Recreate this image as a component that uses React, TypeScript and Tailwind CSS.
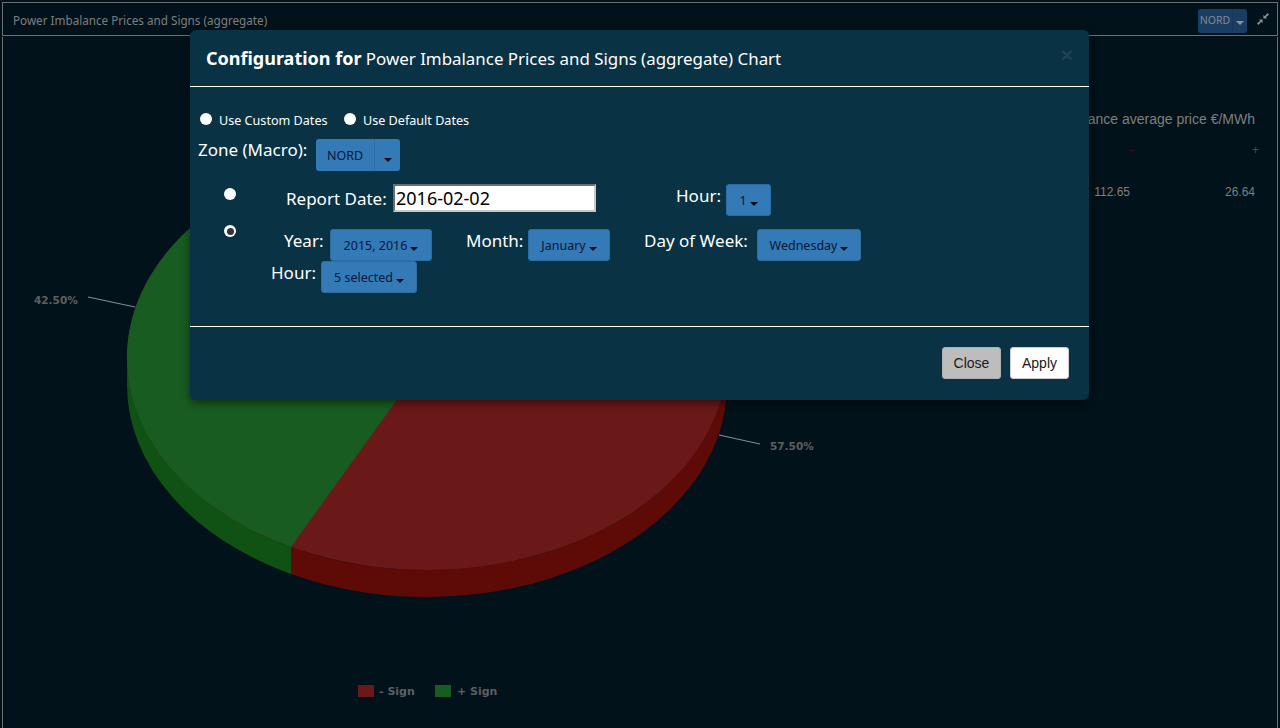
import React from "react";

const UI_FONT = { fontFamily: '"Noto Sans", Tahoma, sans-serif' };
const CHART_FONT = { fontFamily: '"DejaVu Sans", Verdana, sans-serif' };

function Caret({ dim }: { dim?: boolean }) {
  return (
    <span
      className={`inline-block h-0 w-0 border-x-4 border-t-4 border-x-transparent align-middle ${
        dim ? "border-t-[#8a929a]" : "border-t-[#0c0c14]"
      }`}
    />
  );
}

function Radio({ checked }: { checked?: boolean }) {
  return (
    <span className="flex h-3 w-3 shrink-0 items-center justify-center rounded-full bg-white">
      {checked && <span className="h-[7px] w-[7px] rounded-full bg-[#333]" />}
    </span>
  );
}

function Drop({ label, className }: { label: string; className: string }) {
  return (
    <button
      className={`flex h-8 shrink-0 items-center justify-center gap-[3px] rounded-[3px] border border-[#2e6da4] bg-[#337ab7] pt-[3px] text-[12.5px] text-[#0b1638] ${className}`}
    >
      {label}
      <span className="mt-[4px] flex">
        <Caret />
      </span>
    </button>
  );
}

function Label({ children, className }: { children: React.ReactNode; className: string }) {
  return <span className={`shrink-0 text-[17px] leading-6 text-white ${className}`}>{children}</span>;
}

function PieChart() {
  return (
    <svg width="1000" height="691" viewBox="0 0 1000 691" className="block" style={CHART_FONT}>
      {/* offset: svg origin sits at page (3,37) */}
      <g transform="translate(-3 -37)">
        <path d="M127 358 V385 A300 212 0 0 0 291 574 V547 A300 212 0 0 1 127 358 Z" fill="#0f5213" />
        <path d="M291 574 A300 212 0 0 0 727 385 V358 A300 212 0 0 1 291 547 Z" fill="#5e0b08" />
        <ellipse cx="427" cy="358" rx="300" ry="212" fill="#6a1818" />
        <path d="M427 358 L291 547 A300 212 0 0 1 427 146 Z" fill="#195c22" />
        <path d="M88 297 L135 307" stroke="#8a8f92" fill="none" />
        <path d="M719 435 L760 444" stroke="#8a8f92" fill="none" />
        <text x="34" y="304" fontSize="10.5" fontWeight="700" fill="#5c5f62">42.50%</text>
        <text x="770" y="450" fontSize="10.5" fontWeight="700" fill="#5c5f62">57.50%</text>
        <rect x="358" y="685" width="16" height="12" fill="#6a1818" />
        <text x="379" y="695" fontSize="11" fontWeight="700" fill="#5c5f62">- Sign</text>
        <rect x="435" y="685" width="16" height="12" fill="#195c22" />
        <text x="457" y="695" fontSize="11" fontWeight="700" fill="#5c5f62">+ Sign</text>
      </g>
    </svg>
  );
}

function ConfigModal() {
  return (
    <div
      className="absolute left-[190px] top-[30px] w-[899px] rounded-md bg-[#093244] shadow-[0_3px_9px_rgba(0,0,0,0.5)]"
      style={UI_FONT}
    >
      <div className="relative flex h-[57px] items-center border-b border-white pl-4 text-white">
        <h4 className="text-[16.9px]">
          <b className="text-[18px]">Configuration for</b> Power Imbalance Prices and Signs (aggregate) Chart
        </h4>
        <span
          className="absolute right-4 top-[15px] text-[21px] font-bold leading-5 text-[#1e4354]"
          style={{ fontFamily: '"Liberation Sans", sans-serif' }}
        >
          ×
        </span>
      </div>

      <div className="h-[239px] pt-[26px]">
        <div className="flex h-3 items-center pl-[10px] text-[12.6px] text-white">
          <Radio />
          <span className="ml-[7px] mt-1 w-[125px]">Use Custom Dates</span>
          <Radio />
          <span className="ml-[7px] mt-1">Use Default Dates</span>
        </div>

        <div className="mt-[14px] flex h-8 pl-2">
          <Label className="-mt-px w-[118px]">Zone (Macro):</Label>
          <div className="flex">
            <button className="h-8 w-[58px] rounded-l-[3px] bg-[#337ab7] pt-[3px] text-[12.5px] text-[#0b1638]">NORD</button>
            <button className="flex h-8 w-[26px] items-center justify-center rounded-r-[3px] border-l border-[#2e6da4] bg-[#337ab7] pt-[9px]">
              <Caret />
            </button>
          </div>
        </div>

        <div className="mt-[13px] flex h-8 pl-[34px]">
          <span className="mt-1">
            <Radio />
          </span>
          <Label className="ml-[50px] mt-[3px] w-[107px]">Report Date:</Label>
          <input
            readOnly
            value="2016-02-02"
            className="h-[28px] w-[203px] border-2 border-b-[#c8c8c8] border-l-[#6d6d6d] border-r-[#c8c8c8] border-t-[#6d6d6d] bg-white px-px text-[18px] text-black outline-none"
          />
          <Label className="ml-[80px] w-[50px]">Hour:</Label>
          <Drop label="1" className="w-[45px]" />
        </div>

        <div className="mt-[13px] flex h-8 pl-[34px]">
          <span className="mt-[-4px]">
            <Radio checked />
          </span>
          <Label className="ml-12 w-[46px]">Year:</Label>
          <Drop label="2015, 2016" className="w-[102px]" />
          <Label className="ml-[34px] w-[62px]">Month:</Label>
          <Drop label="January" className="w-[82px]" />
          <Label className="ml-[34px] w-[113px]">Day of Week:</Label>
          <Drop label="Wednesday" className="w-[104px]" />
        </div>

        <div className="flex h-8 pl-[81px]">
          <Label className="w-[50px]">Hour:</Label>
          <Drop label="5 selected" className="w-[96px]" />
        </div>
      </div>

      <div
        className="flex h-[74px] items-start justify-end gap-[9px] border-t border-white pr-5 pt-5 text-sm text-[#1a1a1a]"
        style={{ fontFamily: '"Liberation Sans", sans-serif' }}
      >
        <button className="h-8 w-[59px] rounded-[3px] border border-[#b0b0b0] bg-[#bdbdbd]">Close</button>
        <button className="h-8 w-[59px] rounded-[3px] border border-[#ccc] bg-white">Apply</button>
      </div>
    </div>
  );
}

export default function App() {
  return (
    <div className="relative h-[728px] w-[1280px] overflow-hidden bg-[#02121a] px-[2px] pt-[2px]">
      <div
        className="flex h-[34px] items-center justify-between border border-[#6b6f70] pl-[10px] pr-[7px] pt-1 text-[11.7px] text-[#7d7f80]"
        style={UI_FONT}
      >
        <span>Power Imbalance Prices and Signs (aggregate)</span>
        <div className="flex items-center gap-[9px]">
          <div className="flex h-6 w-[49px] rounded-[3px] bg-[#1c3d63] text-[10.5px] text-[#80878e]">
            <span className="flex w-[34px] items-center justify-center">NORD</span>
            <span className="flex flex-1 items-center justify-center border-l border-[#18365a] pt-[3px]">
              <Caret dim />
            </span>
          </div>
          <svg width="14" height="14" viewBox="0 0 14 14" className="mb-[5px]" fill="#8d9194">
            <path d="M6.6 7.4 H2.8 L4.2 8.8 L1 11.6 L2.4 13 L5.2 9.8 L6.6 11.2 Z" />
            <path d="M7.4 6.6 H11.2 L9.8 5.2 L13 2.4 L11.6 1 L8.8 4.2 L7.4 2.8 Z" />
          </svg>
        </div>
      </div>

      <div className="mt-px flex h-[691px] border-x border-[#6b6f70]">
        <div className="w-[1000px] shrink-0">
          <PieChart />
        </div>
        <div
          className="flex-1 pr-[22px] pt-[74px] text-right text-[#7d7f80]"
          style={{ fontFamily: '"Liberation Sans", sans-serif' }}
        >
          <div className="ml-[-200px] whitespace-nowrap text-sm leading-4">Imbalance average price €/MWh</div>
          <div className="-mr-1 mt-[17px] flex h-3 justify-end text-xs leading-3">
            <span className="w-[70px] text-[#5e0b08]">-</span>
            <span className="w-[125px] text-[#1a6a24]">+</span>
          </div>
          <div className="mt-[28px] flex justify-end text-xs leading-4">
            <span className="w-[70px]">112.65</span>
            <span className="w-[125px]">26.64</span>
          </div>
        </div>
      </div>

      <ConfigModal />
    </div>
  );
}
